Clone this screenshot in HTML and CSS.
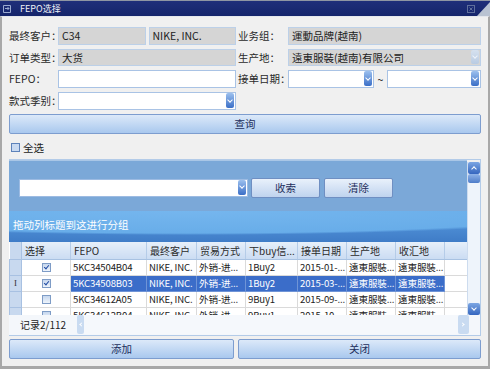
FILE: index.html
```html
<!DOCTYPE html>
<html>
    <head>
        <title>FEPO选择</title>
        <meta charset="UTF-8"/>
        <link rel="stylesheet" href="styles.css">
    </head>
    <body>
        <div class="titlebar">
            <svg class="title-icon" width="8" height="8" viewBox="0 0 8 8">
                <path d="M0.5 0.5 H7.5 V7.5 H0.5 Z" fill="none" stroke="#9aaad0" stroke-width="1"/>
                <path d="M2 3.5 H6 M4.5 2 L6 3.5 L4.5 5" fill="none" stroke="#9aaad0" stroke-width="1"/>
            </svg>
            <span class="title">FEPO选择</span>
            <svg class="close" width="8" height="8" viewBox="0 0 8 8">
                <rect x="0.5" y="0.5" width="7" height="7" fill="none" stroke="#5f6f9c"/>
                <path d="M2.5 2.5 L5.5 5.5 M5.5 2.5 L2.5 5.5" stroke="#5f6f9c"/>
            </svg>
            <svg class="corner" width="13" height="15" viewBox="0 0 13 15">
                <path d="M0 15 L13 1 L13 15 Z" fill="#b9c3d2"/>
            </svg>
        </div>
        <div class="frame">
            <div class="form">
                <span class="lbl">最终客户：</span>
                <div class="pair">
                    <div class="field ro c34">C34</div>
                    <div class="field ro">NIKE, INC.</div>
                </div>
                <span class="lbl lbl-r">业务组：</span>
                <div class="field ro">運動品牌(越南)</div>

                <span class="lbl">订单类型：</span>
                <div class="field ro">大货</div>
                <span class="lbl lbl-r">生产地：</span>
                <div class="field ro"><span class="val">遠東服裝(越南)有限公司</span><span class="drop off"></span></div>

                <span class="lbl">FEPO：</span>
                <div class="field"></div>
                <span class="lbl lbl-r">接单日期：</span>
                <div class="dates">
                    <div class="field date1"><span class="val"></span><span class="drop"></span></div>
                    <span class="tilde">~</span>
                    <div class="field date2"><span class="val"></span><span class="drop"></span></div>
                </div>

                <span class="lbl">款式季别：</span>
                <div class="field"><span class="val"></span><span class="drop"></span></div>
            </div>

            <button class="btn query">查询</button>

            <div class="checkall"><span class="cb"></span>全选</div>

            <div class="grid">
                <div class="grid-main">
                    <div class="grid-body">
                        <div class="filter">
                            <div class="field search"><span class="val"></span><span class="drop"></span></div>
                            <button class="btn small">收索</button>
                            <button class="btn small">清除</button>
                        </div>
                        <div class="groupbar">拖动列标题到这进行分组</div>
                        <table class="rows">
                            <colgroup>
                                <col style="width:12px"><col style="width:49px"><col style="width:76px"><col style="width:50px">
                                <col style="width:49px"><col style="width:52px"><col style="width:49px"><col style="width:49px">
                                <col style="width:49px"><col>
                            </colgroup>
                            <tr class="head">
                                <th class="ind"></th><th>选择</th><th>FEPO</th><th>最终客户</th><th>贸易方式</th>
                                <th>下buy信...</th><th>接单日期</th><th>生产地</th><th>收汇地</th><th class="fill"></th>
                            </tr>
                            <tr>
                                <td class="ind"></td><td class="chk"><span class="cb on"></span></td><td>5KC34504B04</td><td>NIKE, INC.</td><td>外销-进...</td>
                                <td>1Buy2</td><td>2015-01-...</td><td>遠東服裝...</td><td>遠東服裝...</td><td class="fill"></td>
                            </tr>
                            <tr class="sel">
                                <td class="ind">I</td><td class="chk"><span class="cb on"></span></td><td>5KC34508B03</td><td>NIKE, INC.</td><td>外销-进...</td>
                                <td>1Buy2</td><td>2015-03-...</td><td>遠東服裝...</td><td>遠東服裝...</td><td class="fill"></td>
                            </tr>
                            <tr>
                                <td class="ind"></td><td class="chk"><span class="cb"></span></td><td>5KC34612A05</td><td>NIKE, INC.</td><td>外销-进...</td>
                                <td>9Buy1</td><td>2015-09-...</td><td>遠東服裝...</td><td>遠東服裝...</td><td class="fill"></td>
                            </tr>
                            <tr>
                                <td class="ind"></td><td class="chk"><span class="cb"></span></td><td>5KC34612B04</td><td>NIKE, INC.</td><td>外销-进...</td>
                                <td>9Buy1</td><td>2015-10-...</td><td>遠東服裝...</td><td>遠東服裝...</td><td class="fill"></td>
                            </tr>
                        </table>
                    </div>
                    <div class="vscroll">
                        <span class="sbtn up"></span>
                        <span class="thumb"></span>
                        <span class="track"></span>
                        <span class="sbtn down"></span>
                    </div>
                </div>
                <div class="grid-foot">
                    <span class="count">记录2/112</span>
                    <div class="hscroll">
                        <span class="hbtn"></span>
                        <span class="htrack"></span>
                        <span class="hbtn right"></span>
                    </div>
                </div>
            </div>

            <div class="actions">
                <button class="btn add">添加</button>
                <button class="btn close-btn">关闭</button>
            </div>
        </div>
    </body>
</html>
```

FILE: styles.css
```css
body{
    margin: 0;
    width: 490px;
    height: 369px;
    overflow: hidden;
    background: #f0f0f0;
    font-family: "Noto Sans CJK SC", sans-serif;
    font-size: 10.5px;
    color: #222;
}

.titlebar{
    height: 15px;
    display: flex;
    align-items: center;
    border-top: 1px solid #8f96a3;
    background: linear-gradient(#1f2f7a, #15256b);
}
.title-icon{
    margin-left: 3px;
}
.title{
    margin-left: 9px;
    color: #eef0f6;
    font-size: 9px;
    line-height: 14px;
}
.close{
    margin-left: auto;
    margin-right: 2px;
}
.corner{
    align-self: flex-end;
}

.frame{
    height: 353px;
    box-sizing: border-box;
    border: solid #a8a8a8;
    border-width: 1px 2px 3px 2px;
    border-top-color: #e4e7ec;
    padding: 10px 7px 0 7px;
}

/* form */
.form{
    display: grid;
    grid-template-columns: 49px 178px 52px 193px;
    grid-template-rows: 18px 17px 18px 18px;
    row-gap: 4px;
    align-items: stretch;
}
.lbl{
    line-height: 18px;
    white-space: nowrap;
    color: #2a2a2a;
}
.lbl-r{
    padding-left: 2px;
}
.pair{
    display: flex;
    gap: 3px;
}
.pair .c34{
    width: 85px;
    flex: none;
}
.pair .field{
    flex: 1;
}
.field{
    display: flex;
    align-items: center;
    box-sizing: border-box;
    border: 1px solid #a9c3e5;
    background: #fff;
    padding-left: 3px;
    line-height: 14px;
    min-width: 0;
}
.field.ro{
    background: #d5d5d5;
    border-color: #bcd0e8;
}
.val{
    flex: 1;
}
.drop{
    width: 8px;
    align-self: stretch;
    margin: 0 1px 1px 0;
    border-radius: 2px;
    background: linear-gradient(#9cc0ee, #3b6fc7);
    display: flex;
    align-items: center;
    justify-content: center;
}
.drop::after{
    content: "";
    width: 3px;
    height: 3px;
    border: solid #fff;
    border-width: 0 1.2px 1.2px 0;
    transform: translateY(-1px) rotate(45deg);
}
.drop.off{
    background: linear-gradient(#d6e1ef, #b9cbe2);
}
.drop.off::after{
    border-color: #eef3f9;
}
.dates{
    display: flex;
    align-items: stretch;
}
.date1{
    width: 86px;
}
.date2{
    flex: 1;
}
.tilde{
    width: 13px;
    text-align: center;
    line-height: 20px;
}

/* buttons */
.btn{
    font-family: "Noto Sans CJK SC", sans-serif;
    font-size: 10.5px;
    color: #1d2f5c;
    border: 1px solid #7d9dcf;
    border-radius: 2px;
    background: linear-gradient(#dce9f9, #a9c8ee);
    padding: 0;
    line-height: 16px;
}
.query{
    display: block;
    width: 100%;
    height: 20px;
    margin-top: 4px;
}

.checkall{
    display: flex;
    align-items: center;
    height: 15px;
    margin-top: 6px;
    padding-left: 2px;
    line-height: 15px;
}
.cb{
    display: inline-block;
    width: 7px;
    height: 7px;
    border: 1px solid #7e9cc6;
    background: linear-gradient(#c6d7ee, #eef4fb);
    position: relative;
}
.checkall .cb{
    margin-right: 3px;
    border-color: #5d82ba;
    background: #c9daf1;
}
.cb.on::after{
    content: "";
    position: absolute;
    left: 2px;
    top: 0px;
    width: 2px;
    height: 4px;
    border: solid #1f4aa3;
    border-width: 0 1.4px 1.4px 0;
    transform: rotate(40deg);
}

/* grid */
.grid{
    margin-top: 4px;
    height: 177px;
    box-sizing: border-box;
    border: 1px solid #b3cbe8;
    border-left: 0;
}
.grid-main{
    display: flex;
    height: 155px;
}
.grid-body{
    width: 460px;
    overflow: hidden;
    background: #fff;
}
.filter{
    height: 51px;
    box-sizing: border-box;
    background: #7ba8d8;
    border-top: 1px solid #a9c6e6;
    display: flex;
    align-items: center;
    padding: 3px 0 0 10px;
}
.search{
    width: 229px;
    height: 18px;
    border-color: #9dbbe2;
}
.btn.small{
    width: 69px;
    height: 20px;
    margin-left: 3px;
    background: linear-gradient(#e9f1fb, #bfd3ee);
    border-color: #6f8fc2;
}
.btn.small + .btn.small{
    margin-left: 4px;
}
.groupbar{
    height: 31px;
    box-sizing: border-box;
    padding: 7px 0 0 4px;
    line-height: 14px;
    color: #fff;
    background:
        radial-gradient(ellipse 420px 24px at 180px 0, #75b6ee 0, #68ade9 92%, transparent 100%),
        linear-gradient(#5a9de0, #3f7cc7);
}
.rows{
    border-collapse: collapse;
    table-layout: fixed;
    width: 460px;
    font-size: 9.6px;
}
.rows th, .rows td{
    height: 15px;
    padding: 0 0 0 2px;
    white-space: nowrap;
    overflow: hidden;
    text-align: left;
    font-weight: normal;
    line-height: 15px;
}
.rows td{
    border: 1px solid #dadada;
    border-top: 0;
    color: #222;
    letter-spacing: -0.15px;
}
.rows th{
    height: 17px;
    padding-left: 3px;
    font-size: 10px;
    color: #2b2b2b;
    border-right: 1px solid #b5cce8;
    border-bottom: 1px solid #a8c2e2;
    background: linear-gradient(#e6effa, #cbdcf2);
}
.rows .ind{
    padding: 0;
    text-align: center;
    background: #c8d9ef;
    border-color: #a8c1e2;
    font-family: "Liberation Serif", serif;
    font-size: 9px;
}
.rows .chk{
    text-align: center;
    padding: 0;
}
.rows .chk .cb{
    vertical-align: -1px;
}
.rows .fill{
    border-right: 0;
}
.rows tr.sel td{
    background: #3b6dc9;
    color: #fff;
    border-color: #6f94d6;
}
.rows tr.sel td.ind{
    background: #c8d9ef;
    color: #333;
    border-color: #a8c1e2;
}
.rows tr.sel td.chk{
    background: #fff;
    border-color: #dadada;
}
.rows tr.sel td.fill{
    background: #fff;
    border-color: #dadada;
}

.vscroll{
    width: 12px;
    margin-top: 2px;
    display: flex;
    flex-direction: column;
    background: #eef4fb;
    border-left: 1px solid #cddcef;
}
.sbtn{
    height: 12px;
    border-radius: 2px;
    background: linear-gradient(#7ca6e3, #3566bf);
    display: flex;
    align-items: center;
    justify-content: center;
}
.sbtn::after{
    content: "";
    width: 3px;
    height: 3px;
    border: solid #fff;
    border-width: 1.3px 0 0 1.3px;
    transform: translateY(1px) rotate(45deg);
}
.sbtn.down::after{
    transform: translateY(-1px) rotate(225deg);
}
.thumb{
    height: 9px;
    border-radius: 2px;
    background: linear-gradient(#8fb3e8, #4d7cc9);
}
.track{
    flex: 1;
}

.grid-foot{
    height: 20px;
    display: flex;
    align-items: stretch;
    background: #f4f7fb;
}
.count{
    width: 68px;
    padding-left: 11px;
    box-sizing: border-box;
    line-height: 20px;
    font-size: 10px;
    white-space: nowrap;
    color: #222;
}
.hscroll{
    width: 392px;
    display: flex;
    margin-bottom: 1px;
}
.hbtn{
    width: 7px;
    background: #c9dbf1;
    border-radius: 2px;
    display: flex;
    align-items: center;
    justify-content: center;
}
.hbtn::after{
    content: "";
    width: 2px;
    height: 2px;
    border: solid #fff;
    border-width: 0 0 1px 1px;
    transform: translateX(1px) rotate(45deg);
}
.hbtn.right{
    width: 11px;
}
.hbtn.right::after{
    transform: translateX(-1px) rotate(225deg);
}
.htrack{
    flex: 1;
    background: #f5f8fc;
}

.actions{
    display: flex;
    gap: 4px;
    margin-top: 3px;
}
.actions .btn{
    height: 20px;
}
.add{
    width: 225px;
}
.close-btn{
    flex: 1;
}
```
